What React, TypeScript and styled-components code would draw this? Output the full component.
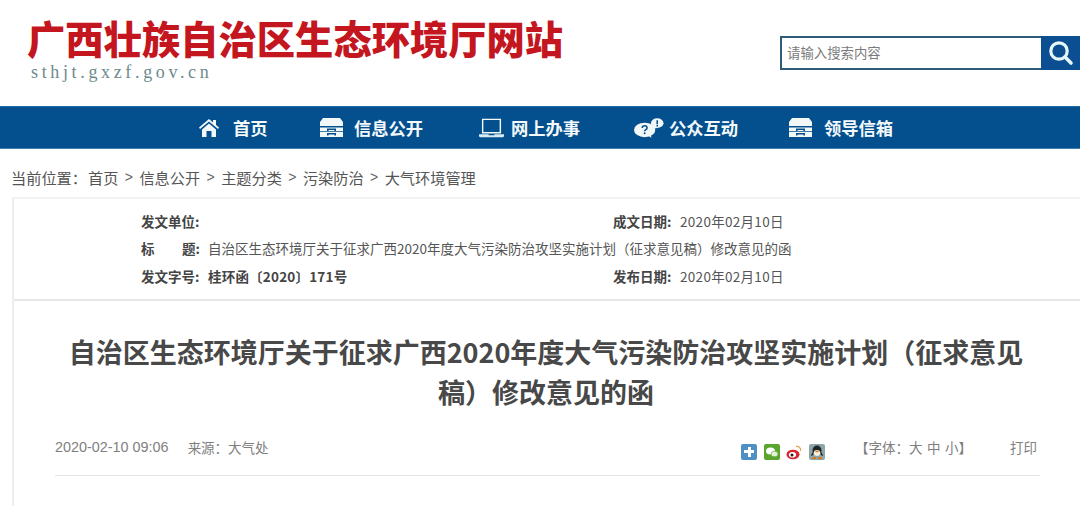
import React from "react";
import styled, { createGlobalStyle } from "styled-components";

const Global = createGlobalStyle`
  html, body { margin: 0; padding: 0; background: #fff; overflow: hidden; }
  body { font-family: "Liberation Sans", "Noto Sans CJK SC", sans-serif; width: 1080px; height: 506px; }
`;
const Page = styled.div`width: 1080px; height: 506px; overflow: hidden; display: flex; flex-direction: column;`;
const Header = styled.header`height: 106px; box-sizing: border-box; display: flex; justify-content: space-between; align-items: flex-start;`;
const Brand = styled.div`display: flex; flex-direction: column; padding: 15px 0 0 27px;`;
const Logo = styled.h1`
  margin: 0; font: 900 38.3px/46px "Noto Sans CJK SC", sans-serif; color: #c4161f; white-space: nowrap;
`;
const Domain = styled.div`
  margin: 1px 0 0 4px; font: 18px/20px "Liberation Serif", serif; color: #6d8a8c; letter-spacing: 3.65px;
`;
const Search = styled.form`
  margin: 36px 0 0; width: 300px; height: 34px; box-sizing: border-box; display: flex;
  border: 2px solid #2d5c78; border-right: 0; background: #fff;
`;
const SearchInput = styled.div`
  flex: 1; padding-left: 5px; font: 13.4px/29px "Noto Sans CJK SC", sans-serif; color: #7b7b7b;
`;
const SearchButton = styled.div`
  width: 39px; margin: -2px 0; background: #0b4f92; display: flex; align-items: center; justify-content: center;
`;
const Nav = styled.nav`
  height: 43px; background: #04508f; display: flex; align-items: center; padding-left: 199px; box-sizing: border-box;
  border-top: 1px solid #1e6ba5; border-bottom: 1px solid #3c83b4;
`;
const NavItem = styled.a<{ $w: number; $gap: number }>`
  width: ${p => p.$w}px; display: flex; align-items: center; color: #f4f9fb; font: 700 17.3px/24px "Noto Sans CJK SC", sans-serif;
  svg { margin-right: ${p => p.$gap}px; flex: none; }
`;
const Crumbs = styled.div`
  height: 48px; padding: 8px 0 0 11px; box-sizing: border-box; display: flex; align-items: center; gap: 6px;
  font: 15.2px/20px "Noto Sans CJK SC", sans-serif; color: #555;
`;
const Prefix = styled.span`width: 71px; flex: none; white-space: nowrap;`;
const Sep = styled.span`width: 9px; text-align: center; font: 14px/20px "Liberation Sans", sans-serif; color: #666;`;
const Card = styled.main`
  margin-left: 12px; flex: 1; border-left: 2px solid #eeeeee; border-top: 2px solid #f2f2f2; display: flex; flex-direction: column;
`;
const Meta = styled.section`
  height: 102px; box-sizing: border-box; border-bottom: 2px solid #e8e8e8; padding: 8px 0 0 127px;
  display: grid; grid-template-columns: 472px 1fr; grid-auto-rows: 27.5px; align-items: center;
  font: 13.5px/20px "Noto Sans CJK SC", sans-serif; color: #555;
`;
const MetaCell = styled.div<{ $wide?: boolean }>`
  white-space: nowrap; display: flex; ${p => p.$wide ? "grid-column: 1 / 3;" : ""}
`;
const Label = styled.b`
  width: 67px; flex: none; font-weight: 700; color: #444; display: flex; justify-content: space-between; padding-right: 8px; box-sizing: border-box;
`;
const DateValue = styled.span`letter-spacing: .3px;`;
const Strong = styled.span`font-weight: 700; color: #444; letter-spacing: .2px;`;
const Title = styled.h2`
  margin: 31px 0 0; padding: 0 55px 0 53px; font: 700 27px/40px "Noto Sans CJK SC", sans-serif; color: #484848; text-align: center;
`;
const Info = styled.div`
  margin: 22px 40px 0 41px; height: 42px; padding-bottom: 15px; box-sizing: border-box; border-bottom: 1px solid #e4e4e4;
  display: flex; align-items: center; font: 13.5px/20px "Noto Sans CJK SC", sans-serif; color: #808080;
`;
const Stamp = styled.span`font: 14.4px/20px "Liberation Sans", sans-serif;`;
const Source = styled.span`margin-left: 19px;`;
const Share = styled.div`margin: 10px 0 0 auto; display: flex; gap: 6.500px; align-items: center;`;
const Badge = styled.span<{ $bg: string }>`
  width: 16px; height: 16px; background: ${p => p.$bg}; border-radius: 2px; display: flex; align-items: center; justify-content: center;
  svg { width: 16px; height: 16px; }
`;
const FontTool = styled.span`margin-left: 30px; word-spacing: 1.500px;`;
const Print = styled.span`margin-left: 38px; margin-right: 3px;`;

const Home = () => (
  <svg viewBox="0 0 20 18" width="20" height="18"><path fill="#f2f7f8" d="M10 0 14 3.400V1h3v5l3 2.600-1 1.400L10 2.500 1 10 0 8.600zM3 10.500 10 4.500l7 6v7.500h-4.500v-6h-5v6H3z" /></svg>
);
const Drawer = () => (
  <svg viewBox="0 0 23 19" width="23" height="19"><path fill="#f2f7f8" d="M3 0h17l3 4v4H0V4zM0 9h23v4H0zM0 13h23v6H0z" /><path fill="#04508f" d="M0 8h23v1.600H0zM7 10.500h9v2.500h-1.600v-1H8.600v1H7zM0 13h23v.8H0zM7 15h9v2.500h-1.600v-1H8.600v1H7z" /></svg>
);
const Laptop = () => (
  <svg viewBox="0 0 26 20" width="25" height="20"><path fill="none" stroke="#f2f7f8" strokeWidth="1.500" d="M3.800 1h18.400v14H3.800z" /><path fill="#d8ecf4" d="M0 16.500h10v1h6v-1h10V18.500l-1 1H1l-1-1z" /></svg>
);
const Bubbles = () => (
  <svg viewBox="0 0 31 20" width="30" height="20">
    <ellipse cx="11" cy="12" rx="11" ry="7.500" fill="#f2f7f8" />
    <path fill="#f2f7f8" d="M13 17l5 3-1-5z" />
    <ellipse cx="24" cy="5" rx="6.500" ry="5" fill="#f2f7f8" />
    <path fill="#f2f7f8" d="M21 8l-2 3 5-1z" />
    <path fill="none" stroke="#04508f" strokeWidth="1.600" d="M8.500 10c0-3 5-3 5 0 0 1.700-2.500 1.500-2.500 3.300" />
    <circle cx="11" cy="15.500" r="1" fill="#04508f" />
    <path stroke="#04508f" strokeWidth="1.600" d="M24 2v4M24 7v1.500" />
  </svg>
);
const Magnifier = () => (
  <svg width="26" height="26" viewBox="0 0 26 26"><circle cx="11" cy="11" r="8.200" fill="none" stroke="#e4f6f6" strokeWidth="3.200" /><path stroke="#e4f6f6" strokeWidth="3.600" strokeLinecap="round" d="M17 17l6 6" /></svg>
);

export default function App() {
  return (
    <Page>
      <Global />
      <Header>
        <Brand>
          <Logo>广西壮族自治区生态环境厅网站</Logo>
          <Domain>sthjt.gxzf.gov.cn</Domain>
        </Brand>
        <Search>
          <SearchInput>请输入搜索内容</SearchInput>
          <SearchButton><Magnifier /></SearchButton>
        </Search>
      </Header>
      <Nav>
        <NavItem $w={121} $gap={14}><Home />首页</NavItem>
        <NavItem $w={159} $gap={11}><Drawer />信息公开</NavItem>
        <NavItem $w={155} $gap={7}><Laptop />网上办事</NavItem>
        <NavItem $w={155} $gap={5}><Bubbles />公众互动</NavItem>
        <NavItem $w={120} $gap={12}><Drawer />领导信箱</NavItem>
      </Nav>
      <Crumbs>
        <Prefix>当前位置：</Prefix><span>首页</span><Sep>&gt;</Sep><span>信息公开</span><Sep>&gt;</Sep><span>主题分类</span><Sep>&gt;</Sep><span>污染防治</span><Sep>&gt;</Sep><span>大气环境管理</span>
      </Crumbs>
      <Card>
        <Meta>
          <MetaCell><Label>发文单位:</Label></MetaCell>
          <MetaCell><Label>成文日期:</Label><DateValue>2020年02月10日</DateValue></MetaCell>
          <MetaCell $wide><Label><span>标</span><span>题:</span></Label>自治区生态环境厅关于征求广西2020年度大气污染防治攻坚实施计划（征求意见稿）修改意见的函</MetaCell>
          <MetaCell><Label>发文字号:</Label><Strong>桂环函〔2020〕171号</Strong></MetaCell>
          <MetaCell><Label>发布日期:</Label><DateValue>2020年02月10日</DateValue></MetaCell>
        </Meta>
        <Title>自治区生态环境厅关于征求广西2020年度大气污染防治攻坚实施计划（征求意见稿）修改意见的函</Title>
        <Info>
          <Stamp>2020-02-10 09:06</Stamp>
          <Source>来源：大气处</Source>
          <Share>
            <Badge $bg="#4f8fc4"><svg viewBox="0 0 16 16"><path fill="#fff" d="M7 3h3v3h3v3h-3v4H7V9H3V6h4z" /></svg></Badge>
            <Badge $bg="#5aa52e"><svg viewBox="0 0 16 16"><ellipse cx="6.500" cy="7" rx="4.500" ry="3.600" fill="#fff" /><ellipse cx="10.500" cy="10" rx="3.500" ry="2.800" fill="#e4f2da" stroke="#5aa52e" strokeWidth=".6" /></svg></Badge>
            <Badge $bg="transparent"><svg viewBox="0 0 16 16"><ellipse cx="7" cy="10.500" rx="6.500" ry="4.800" fill="#d8262f" /><ellipse cx="6.500" cy="10.800" rx="3.600" ry="2.800" fill="#fff" /><circle cx="6" cy="11" r="1.500" fill="#222" /><path fill="none" stroke="#e8a04a" strokeWidth="1.300" d="M10 2.500c3-.6 5 1.500 4.500 4.500" /></svg></Badge>
            <Badge $bg="#8fa6a8"><svg viewBox="0 0 16 16"><ellipse cx="8" cy="6.500" rx="4.500" ry="5" fill="#1e2428" /><ellipse cx="8" cy="9" rx="3.300" ry="3" fill="#f3f0e2" /><path fill="#d9761a" d="M5 6.800h6L8 8.500zM4 13h3v2H3zM9 13h3l1 2H9z" /><path fill="#1e2428" d="M3.500 8 1.800 12l2.700-1zM12.500 8l1.700 4-2.700-1z" /></svg></Badge>
          </Share>
          <FontTool>【字体：大 中 小】</FontTool>
          <Print>打印</Print>
        </Info>
      </Card>
    </Page>
  );
}
